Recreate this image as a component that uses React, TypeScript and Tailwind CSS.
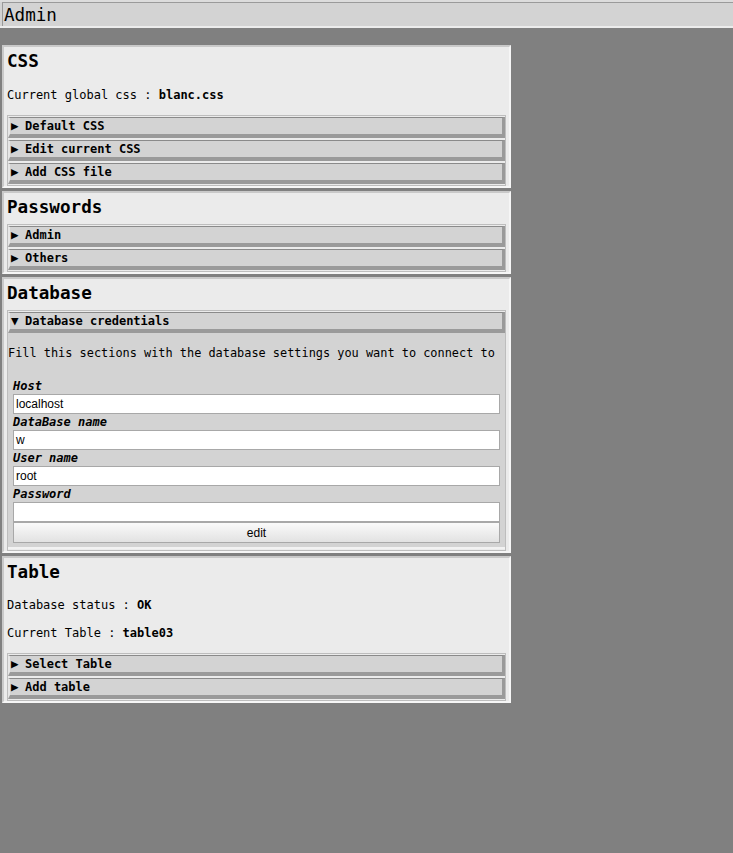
import React from 'react';

const mono = { fontFamily: '"DejaVu Sans Mono", monospace' };
const sans = { fontFamily: '"Liberation Sans", Arial, sans-serif' };

function AccordionButton({ label, open = false }: { label: string; open?: boolean }) {
  return (
    <div className="flex h-[21px] items-center border-t border-l-2 border-t-[#8a8a8a] border-l-[#e6e6e6] border-r-[3px] border-b-[4px] border-r-[#9a9a9a] border-b-[#9a9a9a] bg-[#d3d3d3] pl-[1px] text-[12px] font-bold text-black">
      <span className="inline-block w-[14px] text-[12.5px] leading-none">{open ? '▼' : '▶'}</span>
      {label}
    </div>
  );
}

function Group({ children }: { children: React.ReactNode }) {
  return (
    <div className="mx-[3px] flex flex-col gap-[2px] border border-[#bdbdbd] bg-[#ebebeb] py-[1px]">
      {children}
    </div>
  );
}

function Section({ title, children }: { title: string; children: React.ReactNode }) {
  return (
    <div className="w-[509px] border-2 border-[#f6f6f6] border-t-[#c9c9c9] border-l-[#c9c9c9] bg-[#ebebeb]">
      <h2 className="px-[3px] pt-[3px] pb-[6px] text-[17.6px] font-bold leading-[22px]">{title}</h2>
      {children}
    </div>
  );
}

function Field({ label, value }: { label: string; value: string }) {
  return (
    <div className="flex flex-col">
      <div className="h-[16px] text-[12px] font-bold italic leading-[16px]">{label}</div>
      <div className="h-[20px] border border-[#a8a8a8] bg-white pl-[2px] text-[12px] leading-[18px]" style={sans}>
        {value}
      </div>
    </div>
  );
}

export default function App() {
  return (
    <div className="min-h-[853px] bg-[#808080] text-black" style={mono}>
      <div className="h-[28px] border-t-2 border-b-2 border-t-[#dcdcdc] border-b-[#ececec] bg-[#d3d3d3] pl-[2px]">
        <div className="h-[24px] border-l border-t border-[#9a9a9a] pl-[1px] text-[17.6px] leading-[24px]">Admin</div>
      </div>

      <div className="flex flex-col gap-[3px] pl-[2px] pt-[17px]">
        <Section title="CSS">
          <p className="px-[3px] pt-[10px] pb-[13px] text-[12px] leading-[14px]">
            Current global css : <b>blanc.css</b>
          </p>
          <Group>
            <AccordionButton label="Default CSS" />
            <AccordionButton label="Edit current CSS" />
            <AccordionButton label="Add CSS file" />
          </Group>
        </Section>

        <Section title="Passwords">
          <Group>
            <AccordionButton label="Admin" />
            <AccordionButton label="Others" />
          </Group>
        </Section>

        <Section title="Database">
          <div className="mx-[3px] border border-[#bdbdbd] bg-[#ebebeb] py-[1px]">
            <AccordionButton label="Database credentials" open />
            <div className="border-b-2 border-[#f2f2f2] bg-[#d3d3d3] pb-[4px]">
              <p className="whitespace-nowrap pt-[13px] pb-[18px] text-[11.9px] leading-[14px]">
                Fill this sections with the database settings you want to connect to
              </p>
              <div className="flex flex-col pl-[5px] pr-[5px]">
                <Field label="Host" value="localhost" />
                <Field label="DataBase name" value="w" />
                <Field label="User name" value="root" />
                <Field label="Password" value="" />
                <div
                  className="flex h-[21px] items-center justify-center border border-[#a8a8a8] bg-gradient-to-b from-[#fafafa] to-[#e2e2e2] text-[12px]"
                  style={sans}
                >
                  edit
                </div>
              </div>
            </div>
          </div>
        </Section>

        <Section title="Table">
          <p className="px-[3px] pt-[9px] text-[12px] leading-[14px]">
            Database status : <b>OK</b>
          </p>
          <p className="px-[3px] pt-[14px] pb-[13px] text-[12px] leading-[14px]">
            Current Table : <b>table03</b>
          </p>
          <Group>
            <AccordionButton label="Select Table" />
            <AccordionButton label="Add table" />
          </Group>
        </Section>
      </div>
    </div>
  );
}
